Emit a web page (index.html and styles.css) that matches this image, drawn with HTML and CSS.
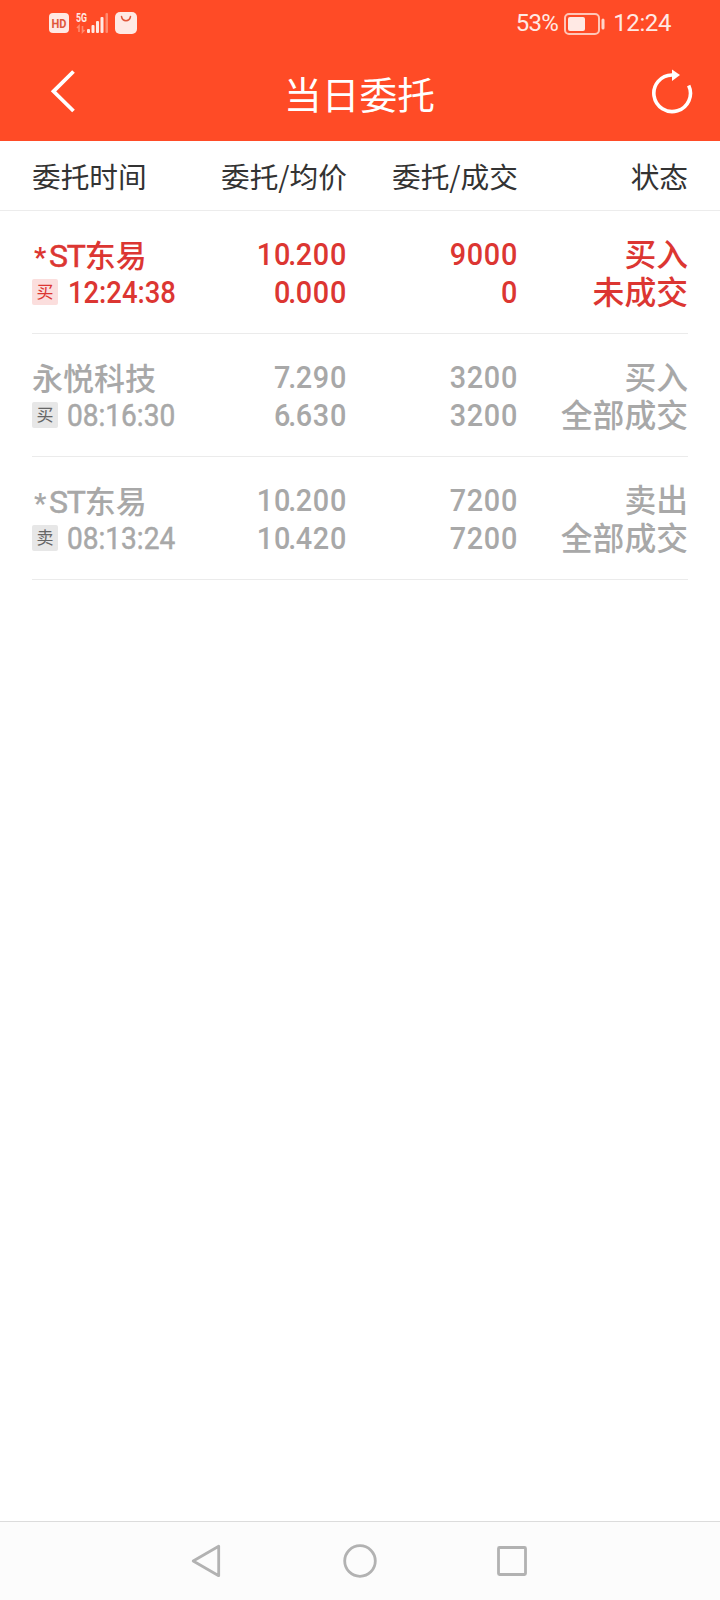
FILE: index.html
```html
<!DOCTYPE html>
<html lang="zh-CN">
<head>
<meta charset="utf-8">
<title>当日委托</title>
<link rel="stylesheet" href="styles.css">
</head>
<body>
<div class="screen">
  <div class="statusbar">
    <div class="status-left">
      <svg class="icon-hd" width="20" height="20" viewBox="0 0 20 20"><rect width="20" height="20" rx="4" fill="#ffe9e4"/><text x="10" y="14.8" text-anchor="middle" textLength="15" lengthAdjust="spacingAndGlyphs" class="hd-text">HD</text></svg>
      <svg class="icon-signal" width="34" height="22" viewBox="0 0 34 22">
        <text x="0" y="9.5" textLength="11" lengthAdjust="spacingAndGlyphs" class="net-text">5G</text>
        <g fill="none" stroke="#ff8a6e" stroke-width="1.6"><path d="M3 20v-6l-2 2M6.500 14v6l2-2"/></g>
        <g fill="#ffe9e4"><rect x="11" y="17" width="3" height="4" rx="1"/><rect x="15.500" y="13" width="3" height="8" rx="1"/><rect x="20" y="9" width="3" height="12" rx="1"/><rect x="24.500" y="5" width="3" height="16" rx="1"/></g>
        <rect x="29.500" y="1" width="2.500" height="20" rx="1" fill="#ff8a6e"/>
      </svg>
      <svg class="icon-bag" width="22" height="22" viewBox="0 0 22 22"><rect width="22" height="22" rx="5" fill="#ffe9e4"/><path d="M6.500 4.500c1 5.500 8 5.500 9 0" fill="none" stroke="#e0573b" stroke-width="1.500" stroke-linecap="round"/></svg>
    </div>
    <div class="status-right">
      <span class="status-text battery-pct">53%</span>
      <svg class="icon-battery" width="42" height="22" viewBox="0 0 42 22"><rect x="1" y="1" width="34" height="20" rx="4" fill="none" stroke="#ffc6b8" stroke-width="2"/><rect x="4" y="4" width="17" height="14" rx="2" fill="#ffe9e4"/><rect x="37.500" y="5.500" width="3" height="11" rx="1.500" fill="#ffd5ca"/></svg>
      <span class="status-text clock">12:24</span>
    </div>
  </div>
  <div class="titlebar">
    <svg class="icon-back" width="28" height="46" viewBox="0 0 28 46"><path d="M25.500 2.500 5.500 22.300 25.500 42" fill="none" stroke="#fff" stroke-width="3.800"/></svg>
    <h1 class="title">当日委托</h1>
    <svg class="icon-refresh" width="44" height="48" viewBox="0 0 44 48"><path d="M22 6A18.300 18.300 0 1 0 38.700 16.500" fill="none" stroke="#fff" stroke-width="3.600"/><path d="M22 .5 30 6 22 12z" fill="#fff"/></svg>
  </div>
  <div class="grid head">
    <span>委托时间</span><span class="right">委托/均价</span><span class="right">委托/成交</span><span class="right">状态</span>
  </div>
  <div class="orders">
    <div class="grid row active">
      <div class="cell">
        <div class="line name"><span class="star">*</span><span class="latin">ST</span>东易</div>
        <div class="line time-line"><span class="badge">买</span><span class="time">12:24:38</span></div>
      </div>
      <div class="cell right"><div class="line num">10<span class="dot">.</span>200</div><div class="line num">0<span class="dot">.</span>000</div></div>
      <div class="cell right"><div class="line num">9000</div><div class="line num">0</div></div>
      <div class="cell right state"><div class="line">买入</div><div class="line">未成交</div></div>
    </div>
    <div class="grid row">
      <div class="cell">
        <div class="line name">永悦科技</div>
        <div class="line time-line"><span class="badge">买</span><span class="time">08:16:30</span></div>
      </div>
      <div class="cell right"><div class="line num">7<span class="dot">.</span>290</div><div class="line num">6<span class="dot">.</span>630</div></div>
      <div class="cell right"><div class="line num">3200</div><div class="line num">3200</div></div>
      <div class="cell right state"><div class="line">买入</div><div class="line">全部成交</div></div>
    </div>
    <div class="grid row">
      <div class="cell">
        <div class="line name"><span class="star">*</span><span class="latin">ST</span>东易</div>
        <div class="line time-line"><span class="badge">卖</span><span class="time">08:13:24</span></div>
      </div>
      <div class="cell right"><div class="line num">10<span class="dot">.</span>200</div><div class="line num">10<span class="dot">.</span>420</div></div>
      <div class="cell right"><div class="line num">7200</div><div class="line num">7200</div></div>
      <div class="cell right state"><div class="line">卖出</div><div class="line">全部成交</div></div>
    </div>
  </div>
  <div class="navbar">
    <svg width="36" height="36" viewBox="0 0 36 36"><path d="M28.700 3.300V32.700L3.200 18z"/></svg>
    <svg width="36" height="36" viewBox="0 0 36 36"><circle cx="18" cy="18" r="15.300"/></svg>
    <svg width="36" height="36" viewBox="0 0 36 36"><rect x="4.500" y="4.500" width="27" height="27" rx="1"/></svg>
  </div>
</div>
</body>
</html>
```
FILE: styles.css
```css
* { box-sizing: border-box; }
body { margin: 0; background: #fff; font-family: "Noto Sans CJK SC", sans-serif; }
.screen { width: 720px; height: 1600px; display: flex; flex-direction: column; overflow: hidden; }
svg { display: block; flex: none; }

.statusbar { height: 46px; background: #ff4b26; display: flex; justify-content: space-between; padding: 0 49px 0 49px; }
.status-left, .status-right { display: flex; align-items: center; }
.icon-hd { margin-right: 7px; }
.icon-signal { margin-right: 5px; }
.icon-battery { margin: 1px 7px 0 6px; }
.hd-text { font: 700 13px Roboto, sans-serif; fill: #e0573b; }
.net-text { font: 700 12px Roboto, sans-serif; fill: #ffe9e4; }
.status-text { font: 400 24px/48px Roboto, sans-serif; color: #ffe9e4; white-space: nowrap; }
.battery-pct { letter-spacing: -0.7px; }
.clock { letter-spacing: -0.4px; }

.titlebar { height: 95px; background: #ff4b26; display: flex; justify-content: space-between; padding: 0 26px 0 48px; }
.icon-back { margin-top: 23px; }
.title { margin: 0 0 0 -7px; font-size: 37.7px; font-weight: 400; line-height: 93px; color: #fff; }
.icon-refresh { margin-top: 23px; }

.grid { display: grid; grid-template-columns: 160px 155px 171px 170px; white-space: nowrap; }
.head { height: 70px; padding: 0 32px; border-bottom: 1px solid #ececec; font-size: 28.7px; line-height: 70px; color: #333; }
.right { text-align: right; }

.orders { flex: 1; padding: 0 32px; }
.row { height: 123px; padding-top: 24px; border-bottom: 1px solid #ebebeb; color: #a8a8a8; }
.row.active { color: #dc3632; }
.line { height: 38px; line-height: 38px; }
.name { font-size: 31px; font-weight: 500; line-height: 37px; }
.latin { font-family: Roboto, sans-serif; font-size: 32px; font-weight: 400; letter-spacing: -1.2px; -webkit-text-stroke: 0.5px currentColor; }
.star { display: inline-block; width: 17px; padding-left: 2px; height: 26px; line-height: 38px; vertical-align: top; font-family: Roboto, sans-serif; font-size: 27px; font-weight: 700; margin-top: 4px; }
.state { font-size: 31.8px; font-weight: 500; }
.state .line { line-height: 35px; }
.num { font-family: Roboto, sans-serif; font-size: 32px; font-weight: 500; letter-spacing: 0.8px; transform: scaleX(0.9); transform-origin: right; }
.dot { letter-spacing: -0.7px; margin-left: -3px; }
.time-line { display: flex; align-items: center; gap: 9px; }
.badge { width: 26px; height: 26px; margin-top: -1px; border-radius: 2px; background: #e7e7e7; color: #666; font-size: 17px; line-height: 24px; text-align: center; }
.time { padding-top: 1px; font-family: Roboto, sans-serif; font-size: 31px; font-weight: 400; -webkit-text-stroke: 0.5px currentColor; transform: scaleX(0.905); transform-origin: left; }
.active .time { font-weight: 500; -webkit-text-stroke: 0; padding-left: 1px; transform: scaleX(0.885); }
.active .badge { background: #fbdedd; color: #dc3632; }

.navbar { height: 79px; border-top: 1px solid #dcdcdc; background: #fcfcfc; display: flex; justify-content: center; align-items: center; gap: 116px; }
.navbar svg { fill: none; stroke: #b2b2b2; stroke-width: 2.8; stroke-linejoin: round; }
```
